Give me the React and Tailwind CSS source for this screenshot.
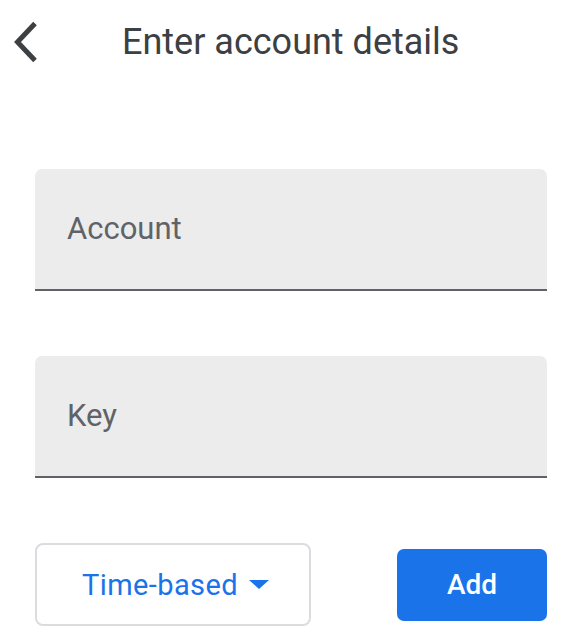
import React from 'react';

const Field = ({ label }) => (
    <div className="h-[122px] bg-[#ececec] rounded-t-[7px] border-b-2 border-[#5f6368] pl-[32px] pt-[42px]">
        <span className="text-[31px] leading-[36px] text-[#5f6368]">{label}</span>
    </div>
);

export default function App() {
    return (
        <div className="w-[572px] h-[641px] bg-white overflow-hidden" style={{ fontFamily: 'Roboto, "Noto Sans", sans-serif' }}>
            {/* Header */}
            <div className="flex items-start pt-[21px]">
                <button className="ml-[12px] w-[26px] h-[42px] flex items-center justify-center">
                    <svg width="26" height="42" viewBox="0 0 26 42">
                        <polyline points="23,2.5 5.5,21 23,39.5" fill="none" stroke="#3c4043" strokeWidth="5" />
                    </svg>
                </button>
                <h1 className="ml-[84px] text-[36px] leading-[42px] text-[#3c4043] font-normal">Enter account details</h1>
            </div>

            {/* Form */}
            <div className="pl-[35px] pr-[25px] mt-[106px] flex flex-col gap-[65px]">
                <Field label="Account" />
                <Field label="Key" />
            </div>

            {/* Actions */}
            <div className="pl-[35px] pr-[25px] mt-[65px] flex items-center justify-between">
                <button className="w-[276px] h-[83px] border-2 border-[#dadce0] rounded-[8px] flex items-center justify-center gap-[11px] pl-[5px]">
                    <span className="text-[29px] leading-[34px] font-normal tracking-[0.4px] text-[#1a73e8]">Time-based</span>
                    <svg width="20" height="9" viewBox="0 0 20 9">
                        <polygon points="0,0 20,0 10,9" fill="#1a73e8" />
                    </svg>
                </button>
                <button className="w-[150px] h-[72px] bg-[#1a73e8] rounded-[7px] flex items-center justify-center">
                    <span className="text-[28px] leading-[34px] font-medium text-white">Add</span>
                </button>
            </div>
        </div>
    );
}
